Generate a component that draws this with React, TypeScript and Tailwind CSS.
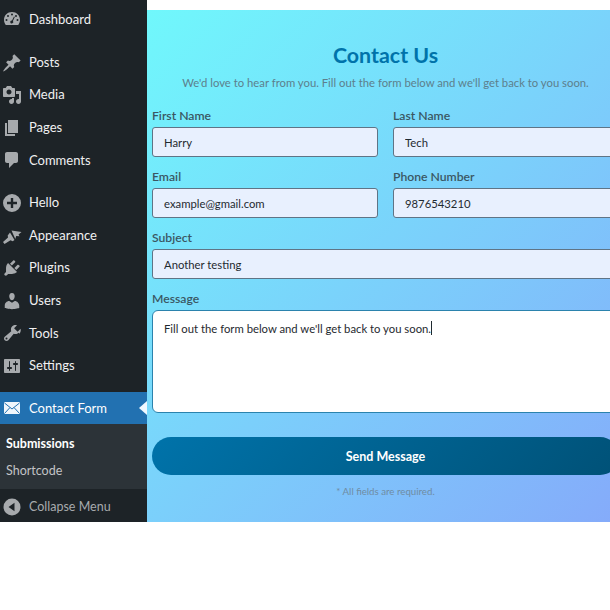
const icons: Record<string, React.ReactNode> = {
  dashboard: (
    <path
      fillRule="evenodd"
      d="M3.76 16h12.48C17.34 14.57 18 12.79 18 10.86 18 6.31 14.42 3 10 3s-8 3.31-8 7.86c0 1.93.66 3.71 1.76 5.14zM10 4.5a1 1 0 1 1 0 2 1 1 0 0 1 0-2zM6 6a1 1 0 1 1 0 2 1 1 0 0 1 0-2zm8 0a1 1 0 1 1 0 2 1 1 0 0 1 0-2zM4.5 10a1 1 0 1 1 0 2 1 1 0 0 1 0-2zm11 0a1 1 0 1 1 0 2 1 1 0 0 1 0-2zM12 7.5l.8.4L10.9 12a1.5 1.5 0 1 1-.9-.5L12 7.500z"
    />
  ),
  posts: (
    <path d="M10.44 3.02l1.82-1.82 6.36 6.35-1.83 1.82c-1.05-.68-2.48-.57-3.41.36l-.75.75c-.92.93-1.04 2.35-.35 3.41l-1.83 1.82-2.41-2.41-2.8 2.79c-.42.42-3.38 2.71-3.8 2.29s1.86-3.39 2.28-3.81l2.79-2.79L4.1 9.36l1.83-1.82c1.05.69 2.48.57 3.4-.36l.75-.75c.93-.92 1.05-2.35.36-3.41z" />
  ),
  media: (
    <path d="M13 11V4c0-.55-.45-1-1-1h-1.67L9 1H5L3.67 3H2c-.55 0-1 .45-1 1v7c0 .55.45 1 1 1h10c.55 0 1-.45 1-1zM7 4.5c1.38 0 2.5 1.12 2.5 2.5S8.38 9.5 7 9.5 4.5 8.38 4.5 7 5.62 4.5 7 4.5zM14 6h5v10.5c0 1.38-1.12 2.5-2.5 2.5S14 17.88 14 16.5s1.12-2.5 2.5-2.5c.17 0 .34.02.5.05V9h-3V6zm-4 8.05V13h2v3.5c0 1.38-1.12 2.5-2.5 2.5S7 17.88 7 16.5 8.12 14 9.5 14c.17 0 .34.02.5.05z" />
  ),
  pages: <path d="M6 15V2h10v13H6zm-1 1h8v2H3V5h2v11z" />,
  comments: (
    <path d="M5 2h9c1.1 0 2 .9 2 2v7c0 1.1-.9 2-2 2h-2l-5 5v-5H5c-1.1 0-2-.9-2-2V4c0-1.1.9-2 2-2z" />
  ),
  hello: (
    <path
      fillRule="evenodd"
      d="M10 1a9 9 0 1 1 0 18 9 9 0 0 1 0-18zM8.800 5v3.800H5v2.400h3.800V15h2.400v-3.800H15V8.800h-3.800V5H8.800z"
    />
  ),
  appearance: (
    <path d="M9.500 4.500L19.500 6 16.500 8.500l1 1.800-3.300-.2-.9 3zM8 6.500l4.500 7.500-1.800 1.200-2.200-.9L2.500 18 1 16l5-4.500-.3-1.900z" />
  ),
  plugins: (
    <path d="M13.11 4.36L9.87 7.6 8 5.73l3.24-3.24c.35-.34 1.05-.2 1.56.32.52.51.66 1.21.31 1.55zm-8 1.77l.91-1.12 9.01 9.01-1.19.84c-.71.71-2.63 1.16-3.82 1.16H6.14L4.9 17.26c-.59.59-1.54.59-2.12 0-.59-.58-.59-1.53 0-2.12l1.24-1.24v-3.88c0-1.13.4-3.19 1.09-3.89zm7.26 3.97l3.24-3.24c.34-.35 1.04-.21 1.55.31.52.51.66 1.21.31 1.55l-3.24 3.25z" />
  ),
  users: (
    <path d="M10 9.25c-2.27 0-2.73-3.44-2.73-3.44C7 4.02 7.82 2 9.97 2c2.16 0 2.98 2.02 2.71 3.81 0 0-.41 3.44-2.68 3.44zm0 2.57L12.72 10c2.39 0 4.52 2.33 4.52 4.53v2.49s-3.65 1.13-7.24 1.13c-3.65 0-7.24-1.13-7.24-1.13v-2.49c0-2.25 1.94-4.48 4.47-4.48z" />
  ),
  tools: (
    <path d="M16.68 9.77c-1.34 1.34-3.3 1.67-4.95.99l-5.41 6.52c-.99.99-2.59.99-3.57 0-.99-.98-.99-2.58 0-3.57l6.52-5.42c-.68-1.65-.35-3.61.99-4.95 1.28-1.28 3.12-1.64 4.73-1.08l-2.9 2.9 3.54 3.54 2.9-2.9c.56 1.61.2 3.45-1.05 4.97zM4.500 14.500a1 1 0 1 0 1 1 1 1 0 0 0-1-1z" />
  ),
  settings: (
    <path d="M18 16V4c0-.55-.45-1-1-1H3c-.55 0-1 .45-1 1v12c0 .55.45 1 1 1h14c.55 0 1-.45 1-1zM8 11h1c.55 0 1 .45 1 1s-.45 1-1 1H8v1.5c0 .28-.22.5-.5.5s-.5-.22-.5-.5V13H6c-.55 0-1-.45-1-1s.45-1 1-1h1V5.500c0-.28.22-.5.5-.5s.5.22.5.5V11zm5-2h-1c-.55 0-1-.45-1-1s.45-1 1-1h1V5.5c0-.28.22-.5.5-.5s.5.22.5.5V7h1c.55 0 1 .45 1 1s-.45 1-1 1h-1v5.5c0 .28-.22.5-.5.5s-.5-.22-.5-.5V9z" />
  ),
  collapse: (
    <path
      fillRule="evenodd"
      d="M10 1.500a8.500 8.500 0 1 1 0 17 8.500 8.500 0 0 1 0-17zM12.500 5.800L6.500 10l6 4.200V5.800z"
    />
  ),
};

const menuTop = [{ icon: "dashboard", label: "Dashboard" }];
const menuContent = [
  { icon: "posts", label: "Posts" },
  { icon: "media", label: "Media" },
  { icon: "pages", label: "Pages" },
  { icon: "comments", label: "Comments" },
];
const menuAdmin = [
  { icon: "hello", label: "Hello" },
  { icon: "appearance", label: "Appearance" },
  { icon: "plugins", label: "Plugins" },
  { icon: "users", label: "Users" },
  { icon: "tools", label: "Tools" },
  { icon: "settings", label: "Settings" },
];

const MenuIcon = ({ name }: { name: string }) => (
  <svg viewBox="0 0 20 20" fill="currentColor" className="h-[20px] w-[20px] shrink-0 text-[#a7aaad]">
    {icons[name]}
  </svg>
);

const MenuItem = ({ icon, label }: { icon: string; label: string }) => (
  <div className="flex h-[32.6px] items-center gap-[7px] pl-[2px] text-[13px] text-[#f0f0f1]">
    <MenuIcon name={icon} />
    <span>{label}</span>
  </div>
);

const Field = ({ label, value }: { label: string; value: string }) => (
  <label className="block">
    <span className="mb-px block h-[19px] text-[12.2px] leading-[17px] font-semibold text-[#3a5763]">{label}</span>
    <input
      readOnly
      value={value}
      className="block h-[30px] w-full rounded-[3px] border border-[#5f7486] bg-[#e8f0fe] px-[11px] pt-px text-[11.3px] text-[#1f2a30] outline-none"
    />
  </label>
);

export default function App() {
  return (
    <div className="flex h-[610px] w-[610px] items-start overflow-hidden bg-white font-['Lato',sans-serif]">
      {/* Sidebar */}
      <div className="flex h-[522px] w-[147px] shrink-0 flex-col bg-[#1d2327]">
        <div className="pt-[3px]">
          {menuTop.map((m) => (
            <MenuItem key={m.label} {...m} />
          ))}
        </div>
        <div className="pt-[10.65px]">
          {menuContent.map((m) => (
            <MenuItem key={m.label} {...m} />
          ))}
        </div>
        <div className="pt-[10px]">
          {menuAdmin.map((m) => (
            <MenuItem key={m.label} {...m} />
          ))}
        </div>

        {/* Active item */}
        <div className="relative mt-[9.75px] flex h-[32px] items-center gap-[7px] bg-[#2271b1] pt-px pl-[2px] text-[13px] text-white">
          <svg viewBox="0 0 20 20" className="h-[20px] w-[20px] shrink-0">
            <rect x="2" y="4" width="16" height="12" rx="1" fill="#f0f6fc" />
            <path d="M2.500 5l7.500 6 7.500-6M2.500 15.500l5.500-6M17.500 15.500L12 9.500" fill="none" stroke="#2271b1" strokeWidth="1" />
          </svg>
          <span>Contact Form</span>
          <div className="absolute top-[9px] right-0 h-0 w-0 border-y-[7px] border-r-[8px] border-y-transparent border-r-[#f0f8ff]" />
        </div>

        {/* Submenu */}
        <div className="h-[65px] bg-[#2c3338] pt-[7px] pl-[6px] text-[12.5px]">
          <div className="flex h-[27px] items-center font-bold text-white">Submissions</div>
          <div className="flex h-[27px] items-center text-[#c3c4c7]">Shortcode</div>
        </div>

        <div className="flex h-[33px] items-center gap-[7px] pt-[3px] pl-[2px] text-[12.5px] text-[#a7aaad]">
          <MenuIcon name="collapse" />
          <span>Collapse Menu</span>
        </div>
      </div>

      {/* Content */}
      <div className="w-[477px] shrink-0 pt-[10px]">
        <div className="h-[512px] bg-[linear-gradient(135deg,#70f8fc,#85aafa)] px-[5px] pt-[31px]">
          <h1 className="text-center text-[21.4px] leading-[28px] font-bold text-[#0073aa]">Contact Us</h1>
          <p className="mt-[5px] text-center text-[11.3px] leading-[18px] text-[#5d7f8c]">
            We'd love to hear from you. Fill out the form below and we'll get back to you soon.
          </p>

          <div className="mt-[15px] grid grid-cols-2 gap-x-[15px] gap-y-[11px]">
            <Field label="First Name" value="Harry" />
            <Field label="Last Name" value="Tech" />
            <Field label="Email" value="example@gmail.com" />
            <Field label="Phone Number" value="9876543210" />
            <div className="col-span-2">
              <Field label="Subject" value="Another testing" />
            </div>
            <div className="col-span-2">
              <span className="mb-px block h-[19px] text-[12.2px] leading-[17px] font-semibold text-[#3a5763]">Message</span>
              <div className="h-[103px] rounded-[6px] border border-[#2b83ad] bg-white px-[11px] py-[8px] text-[11.3px] leading-[18px] text-[#1f2a30]">
                Fill out the form below and we'll get back to you soon.
                <span className="inline-block h-[14px] w-px translate-y-[2px] bg-[#1f2a30]" />
              </div>
            </div>
          </div>

          <button className="mt-[24px] block h-[38px] w-full rounded-[19px] bg-[linear-gradient(135deg,#0073aa,#005177)] pt-[2px] text-[12.5px] font-bold text-white">
            Send Message
          </button>
          <p className="mt-[9px] text-center text-[9.7px] leading-[14px] text-[#6f8ca3]">* All fields are required.</p>
        </div>
      </div>
    </div>
  );
}
